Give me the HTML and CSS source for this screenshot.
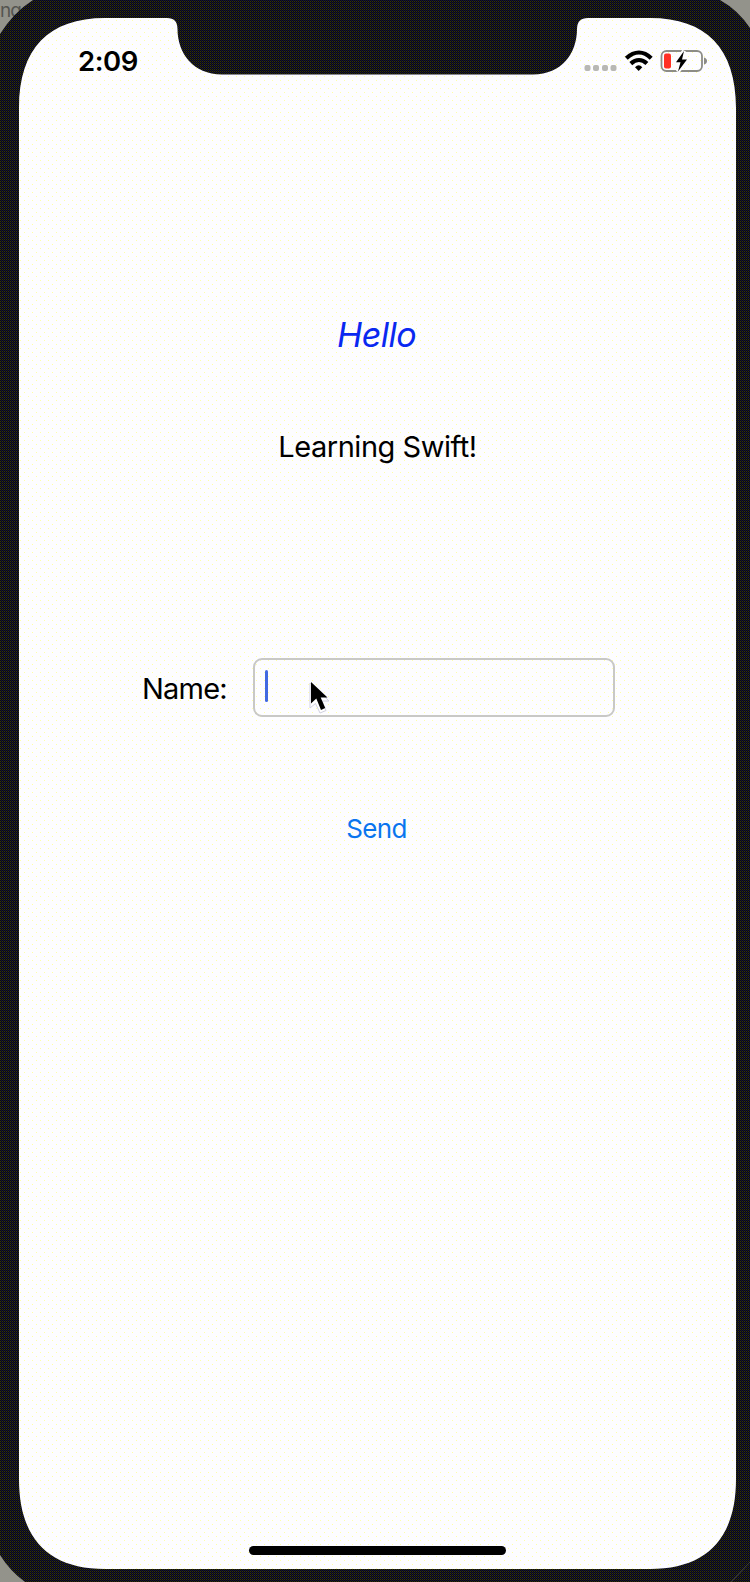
FILE: index.html
```html
<!DOCTYPE html>
<html lang="en">
<head>
<meta charset="utf-8">
<title>Hello</title>
<link rel="stylesheet" href="styles.css">
</head>
<body>
<div class="stage">
  <span class="behind">ng</span>
  <svg class="phone" width="750" height="1582" viewBox="0 0 750 1582">
    <defs>
      <pattern id="grain" width="2" height="2" patternUnits="userSpaceOnUse">
        <rect width="2" height="2" fill="#0c0c0c"/>
        <path d="M0 1h1v1H0z" fill="#30300e"/>
        <path d="M1 0h1v1H1z" fill="#10103c"/>
      </pattern>
      <pattern id="dots" width="8" height="8" patternUnits="userSpaceOnUse">
        <rect width="8" height="8" fill="#fdfdff"/>
        <path d="M0 0h1v1H0zM4 4h1v1H4z" fill="#ffffa4"/>
      </pattern>
    </defs>
    <path fill="url(#grain)" d="M33 0H720Q738 10 750 28V1562L731 1582H25Q10 1571 0 1555V34Q14 12 33 0Z"/>
    <path fill="url(#grain)" d="M750 1562V1582H731Z"/>
    <path fill="none" stroke="#3a3a3a" d="M750 1562L731 1582"/>
    <path fill="url(#dots)" d="M105 18H167Q177.500 18 177.500 29C177.500 53 193 74.500 222 74.500H533C562 74.500 577 53 577 29Q577 18 588 18H650C706 18 736 48 736 108V1479C736 1539 706 1569 650 1569H105C49 1569 19 1539 19 1479V108C19 48 49 18 105 18Z"/>
  </svg>
  <main class="screen">
    <header class="status">
      <span class="time">2:09</span>
      <svg class="indicators" width="126" height="26" viewBox="582 48 126 26">
        <g fill="#b8b8b4">
          <rect x="584.500" y="65" width="6" height="6" rx="2"/><rect x="593" y="65" width="6" height="6" rx="2"/><rect x="602" y="65" width="6" height="6" rx="2"/><rect x="610.500" y="65" width="6" height="6" rx="2"/>
        </g>
        <g fill="none" stroke="#000" stroke-width="4.200">
          <path d="M626.300 58.200C634.500 50.700 643.500 50.700 651.200 58.200"/>
          <path d="M630.800 63.600C636 58.900 642 58.900 646.900 63.600"/>
        </g>
        <path d="M635 67.200Q638.700 63.500 642.300 67.200L638.700 71Z"/>
        <rect x="661.500" y="51" width="40.500" height="20" rx="5" fill="none" stroke="#8c8c86" stroke-width="1.800"/>
        <rect x="664" y="53.500" width="7" height="15" rx="2" fill="#ff3024"/>
        <path d="M684 51L676 62.300H680.500L678 71.500L687 59.500H682Z" fill="#000" stroke="#fdfdff" stroke-width="4" paint-order="stroke"/>
        <path d="M704 57.500Q707 58.500 707 61T704 64.500Z" fill="#8c8c86"/>
      </svg>
    </header>
    <h1 class="hello">Hello</h1>
    <p class="subtitle">Learning Swift!</p>
    <div class="form-row">
      <label class="name-label">Name:</label>
      <div class="field"><span class="caret"></span></div>
    </div>
    <div class="send">Send</div>
    <div class="home"></div>
  </main>
  <svg class="pointer" width="26" height="38" viewBox="0 0 26 38">
    <path d="M4 4V29L9.500 24.500L14 34L20 31.500L16 22H23Z" fill="#fff" stroke="#d0d0e0" stroke-width="1"/>
    <path d="M5 3V24.500L10.300 19.500L15 31L19.200 29L14.700 18.500H21.500Z"/>
  </svg>
</div>
</body>
</html>
```
FILE: styles.css
```css
body {
  margin: 0;
  background: #93938b;
  font-family: Inter, "Liberation Sans", sans-serif;
  color: #000;
}
.stage {
  position: relative;
  width: 750px;
  height: 1582px;
  overflow: hidden;
}
.phone {
  position: absolute;
  inset: 0;
}
.behind {
  position: absolute;
  left: 0;
  top: 0;
  font-size: 19px;
  line-height: 22px;
  letter-spacing: -1px;
  color: #555550;
}
.screen {
  position: relative;
  display: flex;
  flex-direction: column;
  align-items: center;
  box-sizing: border-box;
  width: 755px;
  height: 1582px;
}
.status {
  display: flex;
  justify-content: space-between;
  box-sizing: border-box;
  width: 755px;
  height: 74px;
  padding: 48px 47px 0 78px;
}
.time {
  font-size: 27.500px;
  line-height: 27px;
  font-weight: 600;
  letter-spacing: -0.400px;
}
.hello {
  margin: 239px 0 0;
  padding-right: 2px;
  font-size: 34px;
  line-height: 44px;
  font-weight: 400;
  font-style: italic;
  letter-spacing: -0.500px;
  color: #0a28f0;
}
.subtitle {
  margin: 68px 0 0;
  font-size: 29px;
  line-height: 44px;
  letter-spacing: -0.470px;
}
.form-row {
  display: flex;
  align-items: center;
  align-self: flex-start;
  margin: 189px 0 0 142px;
}
.name-label {
  width: 111px;
  padding-top: 2px;
  font-size: 29px;
  line-height: 44px;
  letter-spacing: -0.800px;
}
.field {
  display: flex;
  align-items: center;
  box-sizing: border-box;
  width: 362px;
  height: 59px;
  padding-left: 10px;
  border: 2px solid #c8c8c6;
  border-radius: 9px;
}
.caret {
  width: 3px;
  height: 32px;
  margin-bottom: 3px;
  border-radius: 2px;
  background: #4169e0;
}
.send {
  margin-top: 92px;
  padding-right: 2px;
  font-size: 26px;
  line-height: 40px;
  letter-spacing: -0.600px;
  color: #0a75ee;
}
.home {
  width: 257px;
  height: 9px;
  margin-top: 697px;
  border-radius: 5px;
  background: #000;
}
.pointer {
  position: absolute;
  left: 306px;
  top: 679px;
}
```
